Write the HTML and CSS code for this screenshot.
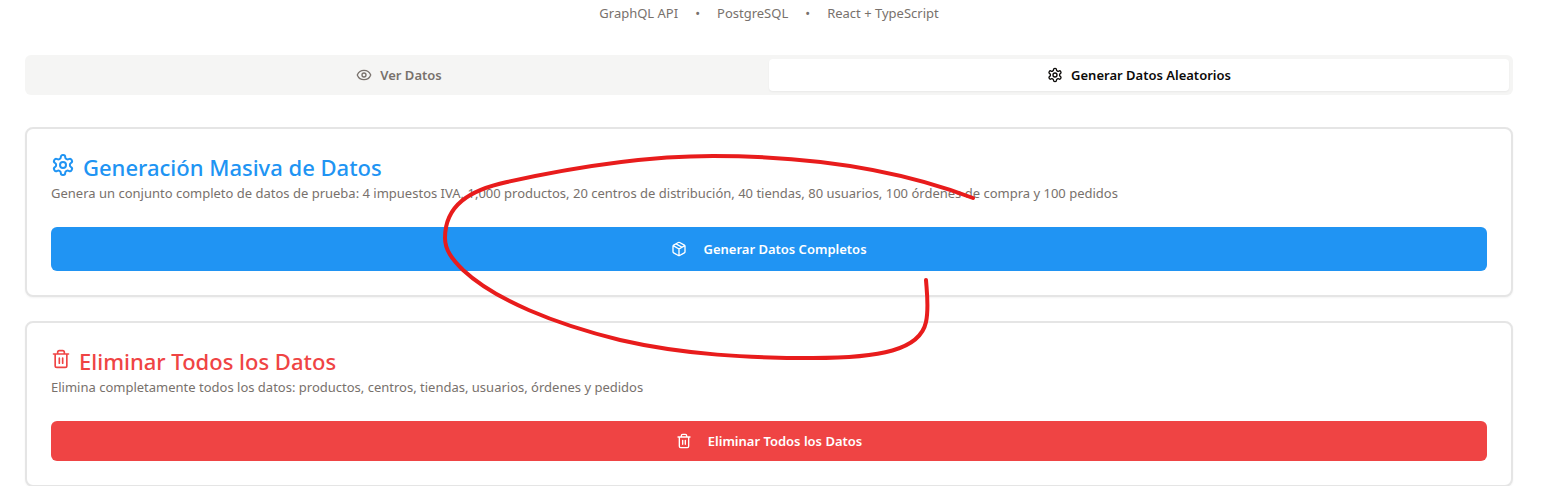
FILE: index.html
```html
<!DOCTYPE html>
<html lang="es">
<head>
<meta charset="utf-8">
<title>Generar Datos Aleatorios</title>
<link rel="stylesheet" href="styles.css">
</head>
<body>
<svg class="symbols" aria-hidden="true">
  <symbol id="gear" viewBox="0 0 24 24">
    <path d="M12.22 2h-.44a2 2 0 0 0-2 2v.18a2 2 0 0 1-1 1.73l-.43.25a2 2 0 0 1-2 0l-.15-.08a2 2 0 0 0-2.73.73l-.22.38a2 2 0 0 0 .73 2.73l.15.1a2 2 0 0 1 1 1.72v.51a2 2 0 0 1-1 1.74l-.15.09a2 2 0 0 0-.73 2.73l.22.38a2 2 0 0 0 2.73.73l.15-.08a2 2 0 0 1 2 0l.43.25a2 2 0 0 1 1 1.73V20a2 2 0 0 0 2 2h.44a2 2 0 0 0 2-2v-.18a2 2 0 0 1 1-1.73l.43-.25a2 2 0 0 1 2 0l.15.08a2 2 0 0 0 2.73-.73l.22-.39a2 2 0 0 0-.73-2.73l-.15-.08a2 2 0 0 1-1-1.74v-.5a2 2 0 0 1 1-1.74l.15-.09a2 2 0 0 0 .73-2.73l-.22-.38a2 2 0 0 0-2.73-.73l-.15.08a2 2 0 0 1-2 0l-.43-.25a2 2 0 0 1-1-1.73V4a2 2 0 0 0-2-2z"/>
    <circle cx="12" cy="12" r="3"/>
  </symbol>
  <symbol id="eye" viewBox="0 0 24 24">
    <path d="M2.062 12.348a1 1 0 0 1 0-.696 10.75 10.75 0 0 1 19.876 0 1 1 0 0 1 0 .696 10.75 10.75 0 0 1-19.876 0"/>
    <circle cx="12" cy="12" r="3"/>
  </symbol>
  <symbol id="box" viewBox="0 0 24 24">
    <path d="M11 21.73a2 2 0 0 0 2 0l7-4A2 2 0 0 0 21 16V8a2 2 0 0 0-1-1.73l-7-4a2 2 0 0 0-2 0l-7 4A2 2 0 0 0 3 8v8a2 2 0 0 0 1 1.73zM12 22V12M3.29 7 12 12l8.71-5M7.5 4.27l9 5.15"/>
  </symbol>
  <symbol id="trash" viewBox="0 0 24 24">
    <path d="M3 6h18M19 6v14c0 1-1 2-2 2H7c-1 0-2-1-2-2V6M8 6V4c0-1 1-2 2-2h4c1 0 2 1 2 2v2M10 11v6M14 11v6"/>
  </symbol>
</svg>
<div class="page">
  <header class="stack">
    <span>GraphQL API</span><span>•</span><span>PostgreSQL</span><span>•</span><span>React + TypeScript</span>
  </header>
  <div class="tabs" role="tablist">
    <button class="tab" role="tab" aria-selected="false"><svg class="icon"><use href="#eye"/></svg>Ver Datos</button>
    <button class="tab tab-active" role="tab" aria-selected="true"><svg class="icon"><use href="#gear"/></svg>Generar Datos Aleatorios</button>
  </div>
  <main class="cards">
    <section class="card">
      <h2 class="title title-blue"><svg class="icon icon-large"><use href="#gear"/></svg>Generación Masiva de Datos</h2>
      <p class="description">Genera un conjunto completo de datos de prueba: 4 impuestos IVA, 1,000 productos, 20 centros de distribución, 40 tiendas, 80 usuarios, 100 órdenes de compra y 100 pedidos</p>
      <button class="action action-blue"><svg class="icon"><use href="#box"/></svg>Generar Datos Completos</button>
    </section>
    <section class="card">
      <h2 class="title title-red"><svg class="icon icon-medium"><use href="#trash"/></svg>Eliminar Todos los Datos</h2>
      <p class="description">Elimina completamente todos los datos: productos, centros, tiendas, usuarios, órdenes y pedidos</p>
      <button class="action action-red"><svg class="icon"><use href="#trash"/></svg>Eliminar Todos los Datos</button>
    </section>
  </main>
  <svg class="scribble" viewBox="0 0 540 210" aria-hidden="true">
    <path d="M533 48C455 18 370 6 273 6C200 6 130 18 67 32C30 40 5 55 5 88C5 100 12 109 23 120C55 150 115 174 180 190C245 205 310 208 373 208C440 208 480 200 486 172C489 158 487 144 486 130"/>
  </svg>
</div>
</body>
</html>
```
FILE: styles.css
```css
* { box-sizing: border-box; }
body {
  margin: 0;
  background: #fff;
  color: #78716c;
  font: 13px/20px "Noto Sans", sans-serif;
}
button { font: inherit; border: 0; cursor: pointer; }
.symbols { position: absolute; width: 0; height: 0; }
.page { position: relative; padding: 3px 41px 0 25px; }
.stack { display: flex; justify-content: center; gap: 17px; }
.tabs {
  display: grid;
  grid-template-columns: 1fr 1fr;
  margin-top: 32px;
  padding: 4px;
  border-radius: 6px;
  background: #f5f5f4;
}
.tab {
  display: flex;
  align-items: center;
  justify-content: center;
  gap: 8px;
  padding: 6px 12px;
  border-radius: 4px;
  background: transparent;
  color: #78716c;
  font-weight: 600;
}
.tab-active {
  background: #fff;
  color: #0c0a09;
  box-shadow: 0 1px 2px rgba(0, 0, 0, 0.05);
}
.icon {
  width: 16px;
  height: 16px;
  flex: none;
  fill: none;
  stroke: currentColor;
  stroke-width: 2;
  stroke-linecap: round;
  stroke-linejoin: round;
}
.cards { display: grid; gap: 24px; margin-top: 32px; }
.card {
  padding: 24px;
  border: 2px solid #e5e5e5;
  border-radius: 8px;
  background: #fff;
  box-shadow: 0 1px 2px rgba(0, 0, 0, 0.05);
}
.title {
  display: flex;
  align-items: center;
  gap: 8px;
  margin: 0;
  font-size: 22px;
  line-height: 28px;
  font-weight: 500;
}
.title .icon { margin-bottom: 4px; }
.icon-large { width: 24px; height: 24px; }
.icon-medium { width: 20px; height: 20px; }
.title-blue { color: #2094f3; }
.title-red { color: #ef4444; }
.description { margin: 2px 0 24px; }
.action {
  display: flex;
  align-items: center;
  justify-content: center;
  gap: 16px;
  width: 100%;
  border-radius: 6px;
  color: #fff;
  font-weight: 600;
}
.action-blue { padding: 12px 32px; background: #2094f3; }
.action-red { padding: 10px 16px; background: #ef4444; }
.scribble {
  position: absolute;
  top: 150px;
  left: 440px;
  width: 540px;
  height: 210px;
  fill: none;
  stroke: #e81c1c;
  stroke-width: 4;
  stroke-linecap: round;
  stroke-linejoin: round;
  pointer-events: none;
}
```
